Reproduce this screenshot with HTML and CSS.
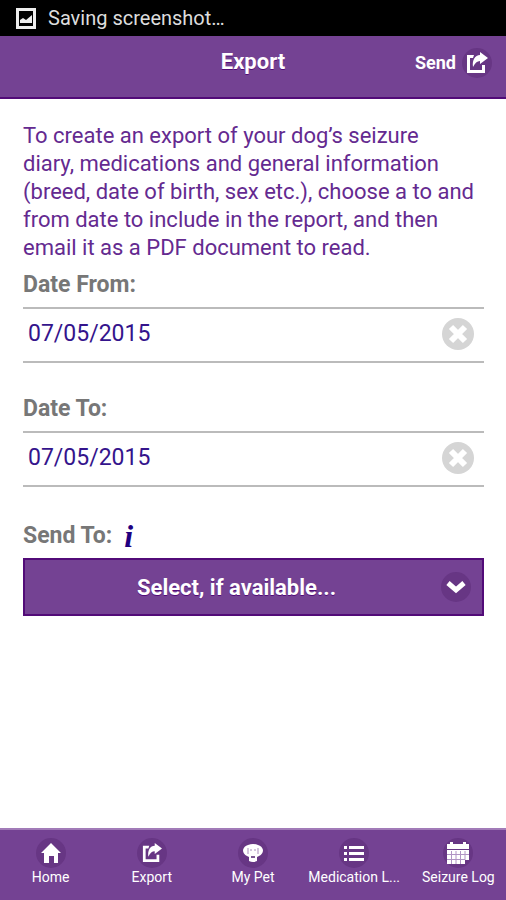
FILE: index.html
```html
<!DOCTYPE html>
<html lang="en">
<head>
<meta charset="utf-8">
<meta name="viewport" content="width=device-width, initial-scale=1">
<title>Export</title>
<link rel="stylesheet" href="styles.css">
</head>
<body>
<svg class="sprite" aria-hidden="true">
  <symbol id="share" viewBox="0 0 22 22">
    <path d="M8 3H1v18h18v-8h-3v5H4V6h3z"/>
    <path d="M14 0l8 6-8 6V9c-3 0-5 2-7 6-1-7 2-12 7-12z"/>
  </symbol>
  <symbol id="cross" viewBox="0 0 32 32">
    <circle cx="16" cy="16" r="16" fill="#d5d5d5"/>
    <path d="M9 9l14 14M23 9L9 23" stroke="#fff" stroke-width="6"/>
  </symbol>
</svg>
<div class="status">
  <svg class="status-icon" viewBox="0 0 20 21" aria-hidden="true">
    <path d="M1.500 1.500h17v18h-17z" fill="none" stroke="#eee" stroke-width="3"/>
    <path d="M4 15v-3l3-2 3 2 6-5v8z" fill="#eee"/>
  </svg>
  <span>Saving screenshot…</span>
</div>
<header class="header">
  <h1 class="title">Export</h1>
  <button class="send" type="button">Send
    <span class="disc"><svg class="share" aria-hidden="true"><use href="#share"/></svg></span>
  </button>
</header>
<main class="content">
  <p class="intro">To create an export of your dog’s seizure<br>diary, medications and general information<br>(breed, date of birth, sex etc.), choose a to and<br>from date to include in the report, and then<br>email it as a PDF document to read.</p>
  <div class="group">
    <label class="label" for="from">Date From:</label>
    <div class="field">
      <input class="input" id="from" type="text" value="07/05/2015">
      <button class="clear" type="button" aria-label="Clear"><svg class="cross"><use href="#cross"/></svg></button>
    </div>
  </div>
  <div class="group">
    <label class="label" for="to">Date To:</label>
    <div class="field">
      <input class="input" id="to" type="text" value="07/05/2015">
      <button class="clear" type="button" aria-label="Clear"><svg class="cross"><use href="#cross"/></svg></button>
    </div>
  </div>
  <div class="group">
    <div class="label-row">
      <label class="label" for="recipient">Send To:</label>
      <a class="info" href="#info">i</a>
    </div>
    <div class="picker">
      <select class="select" id="recipient"><option>Select, if available...</option></select>
      <span class="disc picker-disc"><svg class="chevron" viewBox="0 0 20 14" aria-hidden="true"><path d="M2 3l8 7 8-7" fill="none" stroke="#fff" stroke-width="5"/></svg></span>
    </div>
  </div>
</main>
<nav class="tabs">
  <a class="tab" href="#home">
    <span class="disc"><svg class="icon" viewBox="0 0 20 20"><path d="M10 0l10 10h-3v10h-4v-7H8v7H3V10H0z"/></svg></span>
    <span>Home</span>
  </a>
  <a class="tab" href="#export">
    <span class="disc"><svg class="icon"><use href="#share"/></svg></span>
    <span>Export</span>
  </a>
  <a class="tab" href="#pet">
    <span class="disc"><svg class="icon" viewBox="0 0 20 20"><path d="M5 2q5-2 10 0q4 1 5 5q0 4-4 6l-2 1v4q-4 2-8 0v-4l-2-1Q0 11 0 7q1-4 5-5z"/><path d="M5 5v6M15 5v6M7 7h2M11 7h2" fill="none" stroke="#a88bbb" stroke-width="1"/><path d="M8 13h4v2H8z" fill="#7d5a94"/></svg></span>
    <span>My Pet</span>
  </a>
  <a class="tab" href="#medication">
    <span class="disc"><svg class="icon" viewBox="0 0 20 20"><path d="M0 3h3v3H0zM5 3h15v3H5zM0 9h3v3H0zM5 9h15v3H5zM0 15h3v3H0zM5 15h15v3H5z"/></svg></span>
    <span>Medication L...</span>
  </a>
  <a class="tab" href="#seizure">
    <span class="disc"><svg class="icon calendar" viewBox="0 0 22 22"><path d="M0 2h3V0h3v2h10V0h3v2h3v5H0zM0 8h22v10h-4v4H0z"/><path d="M0 12.500h22M0 17.500h18M4.500 9v13M9 9v13M13.500 9v13M18 9v9" stroke="#b094c4" stroke-width="1"/></svg></span>
    <span>Seizure Log</span>
  </a>
</nav>
</body>
</html>
```
FILE: styles.css
```css
* { box-sizing: border-box; }
body {
  margin: 0;
  min-height: 100vh;
  display: flex;
  flex-direction: column;
  background: #fff;
  font-family: Roboto, sans-serif;
  color: #642a90;
}
button, input, select { font: inherit; border: 0; border-radius: 0; background: none; margin: 0; padding: 0; }
svg { display: block; fill: #fff; }
.sprite { position: absolute; width: 0; height: 0; }

.status {
  display: flex;
  align-items: center;
  gap: 12px;
  height: 36px;
  padding: 0 16px;
  background: #000;
  color: #ddd;
  font-size: 20px;
}
.status-icon { width: 20px; height: 21px; }

.header {
  display: grid;
  grid-template-columns: 1fr auto 1fr;
  align-items: start;
  height: 63px;
  padding: 12px 14px;
  background: #744293;
  border-bottom: 2px solid #520b78;
  color: #fff;
}
.title {
  grid-column: 2;
  margin: 0;
  font-size: 22px;
  line-height: 28px;
  font-weight: 700;
  text-shadow: 0 1px 0 #520b78;
}
.send {
  justify-self: end;
  display: flex;
  align-items: center;
  gap: 6px;
  color: #fff;
  font-size: 18px;
  line-height: 28px;
  font-weight: 700;
}
.disc {
  display: grid;
  place-items: center;
  width: 30px;
  height: 30px;
  border-radius: 50%;
  background: #673684;
}
.share { width: 22px; height: 22px; }

.content { flex: 1; padding: 23px 22px 0 23px; }
.intro { margin: 0; font-size: 22px; line-height: 28px; }
.group { margin-bottom: 23px; }
.label {
  display: block;
  padding: 9px 0 8px;
  color: #777;
  font-size: 23px;
  line-height: 28px;
  font-weight: 700;
}
.field {
  display: flex;
  align-items: center;
  height: 56px;
  padding: 0 10px 2px 5px;
  border-top: 2px solid #bbb;
  border-bottom: 2px solid #bbb;
}
.input { flex: 1; min-width: 0; color: #34148c; font-size: 23px; line-height: 28px; }
.cross { width: 32px; height: 32px; }

.label-row { display: flex; align-items: center; gap: 12px; padding-top: 3px; }
.info {
  color: #1f0080;
  font: italic 700 32px/28px "Liberation Serif", serif;
  text-decoration: none;
}
.picker { position: relative; }
.select {
  appearance: none;
  display: block;
  width: 100%;
  height: 58px;
  padding: 0 50px 0 16px;
  border: 2px solid #520b78;
  background: #744293;
  color: #fff;
  font-size: 22px;
  font-weight: 700;
  text-align: center;
  text-align-last: center;
  text-shadow: 0 1px 0 #520b78;
}
.picker-disc { position: absolute; top: 14px; right: 13px; pointer-events: none; }
.chevron { width: 20px; height: 14px; }

.tabs {
  display: grid;
  grid-template-columns: repeat(5, 1fr);
  height: 72px;
  background: #744293;
  border-top: 2px solid #a17bb8;
}
.tab {
  display: flex;
  flex-direction: column;
  align-items: center;
  padding-top: 8px;
  color: #fff;
  font-size: 14px;
  line-height: 18px;
  text-decoration: none;
  white-space: nowrap;
}
.tab:last-child { padding-left: 6px; }
.icon { width: 20px; height: 20px; }
.calendar { width: 22px; height: 22px; }
```
